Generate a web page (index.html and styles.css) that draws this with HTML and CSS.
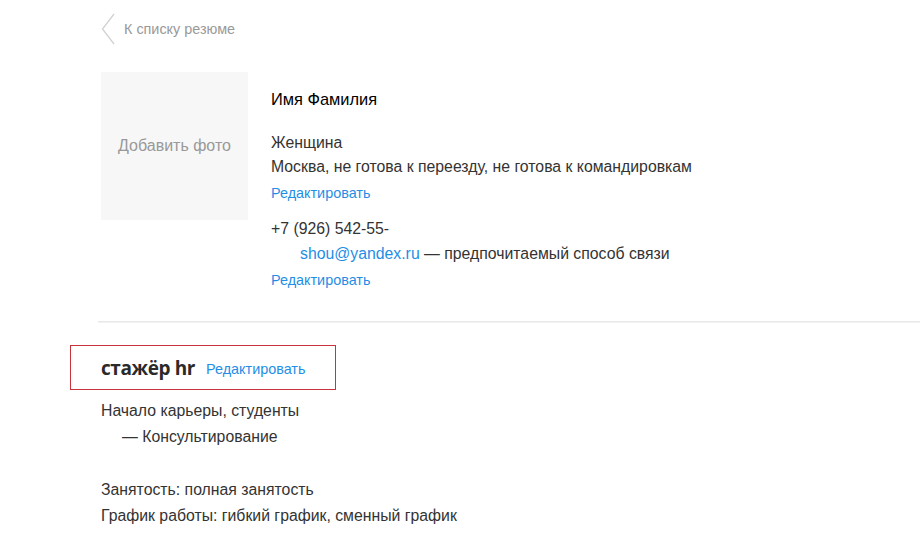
FILE: index.html
```html
<!DOCTYPE html>
<html lang="ru">
<head>
<meta charset="utf-8">
<link rel="stylesheet" href="styles.css">
</head>
<body>
<div class="page">
  <a class="back" href="#">
    <svg class="chev" width="14" height="32" viewBox="0 0 14 32"><polyline points="13,1 1.5,16 13,31" fill="none" stroke="#d2d2d2" stroke-width="1.3"/></svg>
    <span>К списку резюме</span>
  </a>
  <div class="profile">
    <div class="photo">Добавить фото</div>
    <div class="info">
      <div class="name">Имя Фамилия</div>
      <div class="line gap1">Женщина</div>
      <div class="line">Москва, не готова к переезду, не готова к командировкам</div>
      <a class="edit" href="#">Редактировать</a>
      <div class="line gap2">+7 (926) 542-55-</div>
      <div class="line email"><a class="link" href="#">shou@yandex.ru</a> — предпочитаемый способ связи</div>
      <a class="edit" href="#">Редактировать</a>
    </div>
  </div>
</div>
<div class="divider"></div>
<div class="page">
  <div class="title-row">
    <span class="title">стажёр hr</span>
    <a class="edit-inline" href="#">Редактировать</a>
  </div>
  <div class="details">
    <div class="dline">Начало карьеры, студенты</div>
    <div class="dline indent">— Консультирование</div>
    <div class="dline gap3">Занятость: полная занятость</div>
    <div class="dline">График работы: гибкий график, сменный график</div>
  </div>
</div>
</body>
</html>
```
FILE: styles.css
```css
html, body {
  margin: 0;
  padding: 0;
  background: #fff;
}
body {
  font-family: "Liberation Sans", Arial, sans-serif;
  color: #333;
  font-size: 15.8px;
}
a { text-decoration: none; }
.page {
  padding-left: 101px;
}
.back {
  display: flex;
  align-items: center;
  gap: 9px;
  padding-top: 13px;
  height: 32px;
  color: #999;
  font-size: 14.4px;
}
.chev { display: block; }
.profile {
  display: flex;
  gap: 23px;
  margin-top: 27px;
}
.photo {
  width: 147px;
  height: 148px;
  background: #f7f7f7;
  color: #999;
  font-size: 16px;
  display: flex;
  align-items: center;
  justify-content: center;
}
.info {
  display: flex;
  flex-direction: column;
  align-items: flex-start;
}
.name {
  margin-top: 15px;
  line-height: 24px;
  color: #000;
  font-size: 16.4px;
}
.line {
  line-height: 24px;
}
.gap1 { margin-top: 20px; }
.gap2 { margin-top: 12px; }
.email {
  padding-left: 29px;
  margin-top: 1px;
}
.link { color: #1f8ee6; }
.edit {
  color: #1f8ee6;
  font-size: 14.4px;
  line-height: 24px;
  margin-top: 2px;
}
.divider {
  margin-top: 29px;
  margin-left: 98px;
  height: 2px;
  background: #f3f3f3;
  border-top: 1px solid #e8e8e8;
  box-sizing: border-box;
}
.title-row {
  box-sizing: border-box;
  margin-top: 22px;
  margin-left: -31px;
  width: 266px;
  height: 45px;
  border: 1px solid #c9343c;
  display: flex;
  align-items: center;
  padding-left: 30px;
  gap: 11px;
}
.title {
  font-family: "Open Sans", sans-serif;
  font-weight: 700;
  font-size: 19px;
  color: #2a2a2a;
  letter-spacing: -0.4px;
}
.edit-inline {
  color: #1f8ee6;
  font-size: 14.4px;
  margin-top: 2px;
}
.details {
  margin-top: 8px;
}
.dline {
  line-height: 26px;
}
.indent { padding-left: 21px; }
.gap3 { margin-top: 27px; }
```
